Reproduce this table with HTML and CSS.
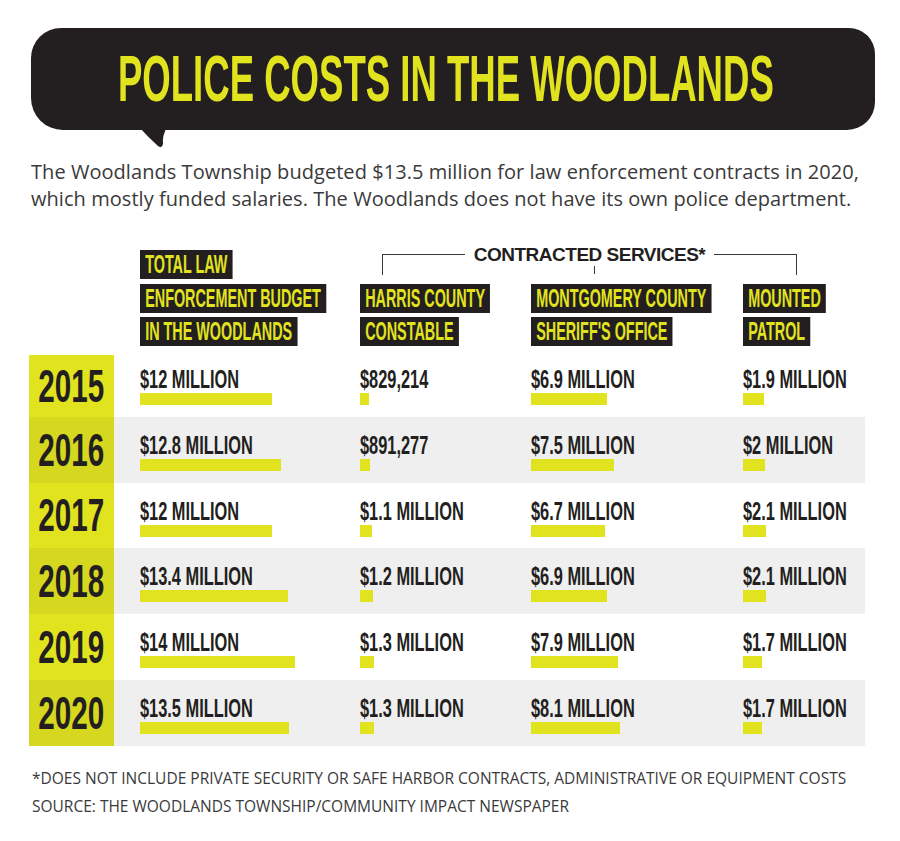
FILE: index.html
```html
<!DOCTYPE html>
<html lang="en">
<head>
<meta charset="utf-8">
<title>Police costs in The Woodlands</title>
<link rel="stylesheet" href="styles.css">
</head>
<body>
<div class="page">
  <div class="bubble">
    <h1 class="title">POLICE COSTS IN THE WOODLANDS</h1>
    <svg class="tail" width="30" height="22" viewBox="0 0 30 22"><path d="M0 0 Q9 10 19 19 Q23 22 24 17 Q23 9 28 0 Z" fill="#231f20"/></svg>
  </div>
  <p class="intro">The Woodlands Township budgeted $13.5 million for law enforcement contracts in 2020,<br>which mostly funded salaries. The Woodlands does not have its own police department.</p>

  <div class="header">
    <div class="hcell c1 r1"><span class="lab">TOTAL LAW</span></div>
    <div class="bracket">
      <div class="br-side br-left"></div>
      <div class="br-text">CONTRACTED SERVICES*</div>
      <div class="br-side br-right"></div>
    </div>
    <div class="hcell c1 r2"><span class="lab">ENFORCEMENT BUDGET</span></div>
    <div class="hcell c1 r3"><span class="lab">IN THE WOODLANDS</span></div>
    <div class="hcell c2 r2"><span class="lab">HARRIS COUNTY</span></div>
    <div class="hcell c2 r3"><span class="lab">CONSTABLE</span></div>
    <div class="hcell c3 r2"><span class="lab">MONTGOMERY COUNTY</span></div>
    <div class="hcell c3 r3"><span class="lab">SHERIFF'S OFFICE</span></div>
    <div class="hcell c4 r2"><span class="lab">MOUNTED</span></div>
    <div class="hcell c4 r3"><span class="lab">PATROL</span></div>
  </div>

  <div class="table">
    <div class="row">
      <div class="year"><span class="ytxt">2015</span></div>
      <div class="cells">
        <div class="cell"><span class="val">$12 MILLION</span><div class="bar" style="width:132px"></div></div>
        <div class="cell"><span class="val">$829,214</span><div class="bar" style="width:9px"></div></div>
        <div class="cell"><span class="val">$6.9 MILLION</span><div class="bar" style="width:76px"></div></div>
        <div class="cell"><span class="val">$1.9 MILLION</span><div class="bar" style="width:21px"></div></div>
      </div>
    </div>
    <div class="row alt">
      <div class="year"><span class="ytxt">2016</span></div>
      <div class="cells">
        <div class="cell"><span class="val">$12.8 MILLION</span><div class="bar" style="width:141px"></div></div>
        <div class="cell"><span class="val">$891,277</span><div class="bar" style="width:10px"></div></div>
        <div class="cell"><span class="val">$7.5 MILLION</span><div class="bar" style="width:83px"></div></div>
        <div class="cell"><span class="val">$2 MILLION</span><div class="bar" style="width:22px"></div></div>
      </div>
    </div>
    <div class="row">
      <div class="year"><span class="ytxt">2017</span></div>
      <div class="cells">
        <div class="cell"><span class="val">$12 MILLION</span><div class="bar" style="width:132px"></div></div>
        <div class="cell"><span class="val">$1.1 MILLION</span><div class="bar" style="width:12px"></div></div>
        <div class="cell"><span class="val">$6.7 MILLION</span><div class="bar" style="width:74px"></div></div>
        <div class="cell"><span class="val">$2.1 MILLION</span><div class="bar" style="width:23px"></div></div>
      </div>
    </div>
    <div class="row alt">
      <div class="year"><span class="ytxt">2018</span></div>
      <div class="cells">
        <div class="cell"><span class="val">$13.4 MILLION</span><div class="bar" style="width:148px"></div></div>
        <div class="cell"><span class="val">$1.2 MILLION</span><div class="bar" style="width:13px"></div></div>
        <div class="cell"><span class="val">$6.9 MILLION</span><div class="bar" style="width:76px"></div></div>
        <div class="cell"><span class="val">$2.1 MILLION</span><div class="bar" style="width:23px"></div></div>
      </div>
    </div>
    <div class="row">
      <div class="year"><span class="ytxt">2019</span></div>
      <div class="cells">
        <div class="cell"><span class="val">$14 MILLION</span><div class="bar" style="width:155px"></div></div>
        <div class="cell"><span class="val">$1.3 MILLION</span><div class="bar" style="width:14px"></div></div>
        <div class="cell"><span class="val">$7.9 MILLION</span><div class="bar" style="width:87px"></div></div>
        <div class="cell"><span class="val">$1.7 MILLION</span><div class="bar" style="width:19px"></div></div>
      </div>
    </div>
    <div class="row alt">
      <div class="year"><span class="ytxt">2020</span></div>
      <div class="cells">
        <div class="cell"><span class="val">$13.5 MILLION</span><div class="bar" style="width:149px"></div></div>
        <div class="cell"><span class="val">$1.3 MILLION</span><div class="bar" style="width:14px"></div></div>
        <div class="cell"><span class="val">$8.1 MILLION</span><div class="bar" style="width:89px"></div></div>
        <div class="cell"><span class="val">$1.7 MILLION</span><div class="bar" style="width:19px"></div></div>
      </div>
    </div>
  </div>

  <div class="notes">
    <p>*DOES NOT INCLUDE PRIVATE SECURITY OR SAFE HARBOR CONTRACTS, ADMINISTRATIVE OR EQUIPMENT COSTS</p>
    <p>SOURCE: THE WOODLANDS TOWNSHIP/COMMUNITY IMPACT NEWSPAPER</p>
  </div>
</div>
</body>
</html>
```
FILE: styles.css
```css
* { box-sizing: border-box; }
html, body { margin: 0; padding: 0; background: #ffffff; }
body { width: 900px; height: 841px; overflow: hidden; font-family: "Liberation Sans", Arial, sans-serif; color: #231f20; }

.page { padding-top: 28px; }

.bubble {
  position: relative;
  margin-left: 31px;
  width: 844px;
  height: 102px;
  background: #231f20;
  border-radius: 30px 26px 28px 32px;
  display: flex;
  align-items: center;
  padding-left: 87px;
}
.title {
  margin: 0;
  display: inline-block;
  white-space: nowrap;
  font-family: "Liberation Sans", Arial, sans-serif;
  font-weight: 700;
  font-size: 64px;
  line-height: 64px;
  color: #e2e31f;
  transform: scaleX(0.571);
  transform-origin: left center;
}
.tail {
  position: absolute;
  left: 108px;
  top: 99px;
}

.intro {
  margin: 28px 0 0 31px;
  font-family: "Open Sans", "Liberation Sans", sans-serif;
  font-size: 20px;
  line-height: 27px;
  letter-spacing: 0.05px;
  color: #3a3a3a;
  white-space: nowrap;
}

.header {
  margin: 38px 0 0 140px;
  display: grid;
  grid-template-columns: 220px 171px 212px 122px;
  grid-template-rows: 29px 29px 29px;
  row-gap: 4.5px;
}
.hcell { white-space: nowrap; }
.c1 { grid-column: 1; }
.c2 { grid-column: 2; }
.c3 { grid-column: 3; }
.c4 { grid-column: 4; }
.r1 { grid-row: 1; }
.r2 { grid-row: 2; }
.r3 { grid-row: 3; }
.lab {
  display: inline-block;
  height: 29px;
  padding: 0 9px;
  background: #231f20;
  color: #e2e31f;
  font-weight: 700;
  font-size: 25px;
  line-height: 29px;
  transform: scaleX(0.575);
  transform-origin: left center;
}

.bracket {
  grid-column: 2 / 5;
  grid-row: 1;
  display: flex;
  align-items: flex-start;
  padding: 0 68px 0 22px;
}
.br-side {
  flex: 1;
  height: 21px;
  margin-top: 4px;
  border-top: 1.5px solid #3a3a3a;
}
.br-left { border-left: 1.5px solid #3a3a3a; }
.br-right { border-right: 1.5px solid #3a3a3a; }
.br-text {
  position: relative;
  margin-top: -5px;
  padding: 0 9px;
  font-weight: 700;
  font-size: 19px;
  line-height: 19px;
  letter-spacing: -0.5px;
  white-space: nowrap;
  color: #231f20;
}
.br-text::after {
  content: "";
  position: absolute;
  left: 129px;
  top: 21px;
  width: 1.5px;
  height: 8px;
  background: #3a3a3a;
}

.table { margin-top: 5px; margin-left: 29px; }
.row { display: flex; height: 65.8px; }
.year {
  width: 85px;
  background: #e2e31f;
  display: flex;
  align-items: center;
  justify-content: center;
}
.row:first-child .year { background: linear-gradient(#ffffff 4px, #e2e31f 4px); padding-top: 4px; }
.row.alt .year { background: #d6d71f; }
.ytxt {
  display: inline-block;
  font-weight: 700;
  font-size: 46px;
  line-height: 46px;
  color: #231f20;
  transform: scaleX(0.645);
}
.cells {
  width: 751px;
  padding-left: 26px;
  display: grid;
  grid-template-columns: 220px 171px 212px 122px;
}
.row.alt .cells { background: #efefef; }
.cell { padding-top: 16px; white-space: nowrap; }
.val {
  display: inline-block;
  font-weight: 700;
  font-size: 25px;
  line-height: 25px;
  color: #231f20;
  transform: scaleX(0.655);
  transform-origin: left center;
}
.bar {
  height: 12px;
  margin-top: 1px;
  background: #e2e31f;
}

.notes {
  margin: 18px 0 0 32px;
  font-family: "Open Sans", "Liberation Sans", sans-serif;
  font-size: 15.5px;
  line-height: 28px;
  color: #3a3a3a;
}
.notes p { margin: 0; white-space: nowrap; }
```
